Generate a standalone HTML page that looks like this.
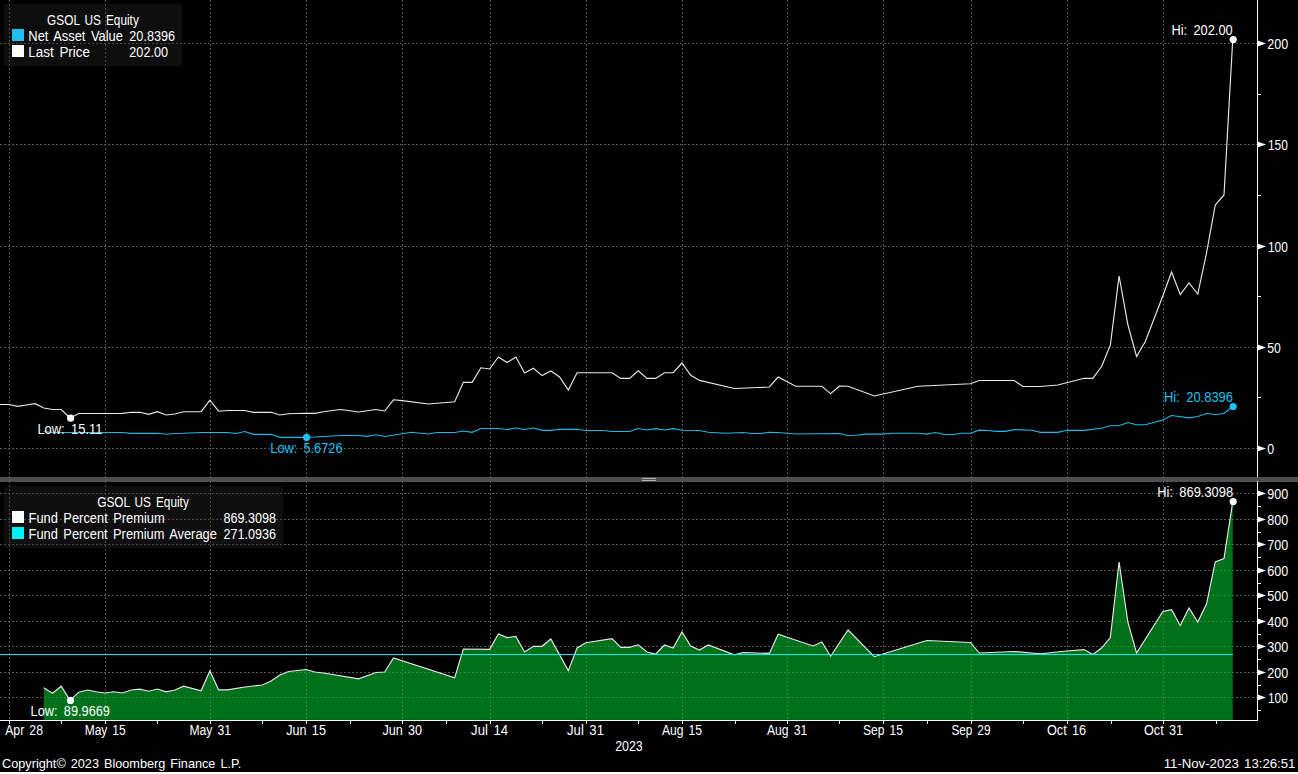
<!DOCTYPE html>
<html><head><meta charset="utf-8"><style>
html,body{margin:0;padding:0;background:#000;width:1298px;height:774px;overflow:hidden}
svg{display:block}
text{font-family:"Liberation Sans", sans-serif}
</style></head><body>
<svg width="1298" height="774" viewBox="0 0 1298 774">
<rect x="0" y="0" width="1298" height="774" fill="#000"/>
<rect x="0" y="772" width="1298" height="2" fill="#fff"/>
<path d="M9.5 0V477M9.5 481V720M105.5 0V477M105.5 481V720M210.5 0V477M210.5 481V720M306.5 0V477M306.5 481V720M402.5 0V477M402.5 481V720M490.5 0V477M490.5 481V720M586.5 0V477M586.5 481V720M682.5 0V477M682.5 481V720M787.5 0V477M787.5 481V720M883.5 0V477M883.5 481V720M971.5 0V477M971.5 481V720M1067.5 0V477M1067.5 481V720M1163.5 0V477M1163.5 481V720" stroke="#575757" stroke-width="1" stroke-dasharray="2 2" fill="none" shape-rendering="crispEdges"/>
<path d="M0 43.5H1257M0 144.5H1257M0 246.5H1257M0 347.5H1257M0 448.5H1257M0 493.5H1257M0 519.5H1257M0 544.5H1257M0 570.5H1257M0 595.5H1257M0 621.5H1257M0 646.5H1257M0 672.5H1257M0 697.5H1257" stroke="#575757" stroke-width="1" stroke-dasharray="2 2" fill="none" shape-rendering="crispEdges"/>
<rect x="4" y="4" width="178" height="62" rx="3" fill="rgba(47,47,47,0.3)"/>
<rect x="4" y="486" width="279" height="62" rx="3" fill="rgba(47,47,47,0.3)"/>
<path d="M43.77 720 L43.77 687.80 L52.51 693.20 L61.25 686.20 L70.00 700.40 L78.74 692.20 L87.48 690.00 L96.22 691.80 L104.97 693.00 L113.71 691.80 L122.45 693.00 L131.19 690.00 L139.94 689.20 L148.68 691.20 L157.42 689.00 L166.16 691.80 L174.91 690.00 L183.65 686.20 L201.13 690.80 L209.88 671.00 L218.62 689.80 L227.36 689.80 L244.84 687.00 L262.33 685.00 L271.07 681.00 L279.81 675.00 L288.56 671.50 L306.04 669.50 L314.78 672.00 L323.53 673.00 L358.50 678.80 L375.98 672.50 L384.72 672.00 L393.47 658.00 L454.66 677.70 L463.40 649.00 L489.63 649.30 L498.37 634.00 L507.12 637.60 L515.86 636.40 L524.60 652.00 L533.34 646.30 L542.09 646.30 L550.83 639.00 L568.31 670.60 L577.06 648.00 L585.80 642.70 L612.03 638.60 L620.77 647.30 L629.51 647.30 L638.25 644.80 L647.00 652.00 L655.74 654.00 L664.48 645.00 L673.22 648.00 L681.96 632.00 L690.71 646.00 L699.45 650.00 L708.19 645.00 L734.42 654.80 L743.16 652.50 L769.39 653.40 L778.13 634.30 L813.10 646.00 L821.84 642.00 L830.59 656.30 L848.07 630.00 L874.30 656.70 L883.04 654.00 L926.75 640.50 L970.46 642.50 L979.21 653.00 L1014.18 651.50 L1040.40 653.70 L1066.63 651.00 L1084.12 649.60 L1092.86 654.50 L1101.60 648.00 L1110.34 637.50 L1119.08 562.00 L1127.83 622.00 L1136.57 653.00 L1162.80 611.40 L1171.54 609.60 L1180.28 625.50 L1189.02 608.00 L1197.77 622.00 L1206.51 604.00 L1215.25 562.00 L1223.99 558.50 L1232.74 501.70 L1232.74 720Z" fill="#01701b"/>
<rect x="44" y="719" width="1189" height="1" fill="#006712"/>
<clipPath id="ca"><path d="M43.77 720 L43.77 687.80 L52.51 693.20 L61.25 686.20 L70.00 700.40 L78.74 692.20 L87.48 690.00 L96.22 691.80 L104.97 693.00 L113.71 691.80 L122.45 693.00 L131.19 690.00 L139.94 689.20 L148.68 691.20 L157.42 689.00 L166.16 691.80 L174.91 690.00 L183.65 686.20 L201.13 690.80 L209.88 671.00 L218.62 689.80 L227.36 689.80 L244.84 687.00 L262.33 685.00 L271.07 681.00 L279.81 675.00 L288.56 671.50 L306.04 669.50 L314.78 672.00 L323.53 673.00 L358.50 678.80 L375.98 672.50 L384.72 672.00 L393.47 658.00 L454.66 677.70 L463.40 649.00 L489.63 649.30 L498.37 634.00 L507.12 637.60 L515.86 636.40 L524.60 652.00 L533.34 646.30 L542.09 646.30 L550.83 639.00 L568.31 670.60 L577.06 648.00 L585.80 642.70 L612.03 638.60 L620.77 647.30 L629.51 647.30 L638.25 644.80 L647.00 652.00 L655.74 654.00 L664.48 645.00 L673.22 648.00 L681.96 632.00 L690.71 646.00 L699.45 650.00 L708.19 645.00 L734.42 654.80 L743.16 652.50 L769.39 653.40 L778.13 634.30 L813.10 646.00 L821.84 642.00 L830.59 656.30 L848.07 630.00 L874.30 656.70 L883.04 654.00 L926.75 640.50 L970.46 642.50 L979.21 653.00 L1014.18 651.50 L1040.40 653.70 L1066.63 651.00 L1084.12 649.60 L1092.86 654.50 L1101.60 648.00 L1110.34 637.50 L1119.08 562.00 L1127.83 622.00 L1136.57 653.00 L1162.80 611.40 L1171.54 609.60 L1180.28 625.50 L1189.02 608.00 L1197.77 622.00 L1206.51 604.00 L1215.25 562.00 L1223.99 558.50 L1232.74 501.70 L1232.74 720Z"/></clipPath>
<path d="M9.5 481V720M105.5 481V720M210.5 481V720M306.5 481V720M402.5 481V720M490.5 481V720M586.5 481V720M682.5 481V720M787.5 481V720M883.5 481V720M971.5 481V720M1067.5 481V720M1163.5 481V720M0 493.5H1257M0 519.5H1257M0 544.5H1257M0 570.5H1257M0 595.5H1257M0 621.5H1257M0 646.5H1257M0 672.5H1257M0 697.5H1257" stroke="#5a9a66" stroke-opacity="0.55" stroke-width="1" stroke-dasharray="2 2" fill="none" shape-rendering="crispEdges" clip-path="url(#ca)"/>
<polyline points="43.77,687.80 52.51,693.20 61.25,686.20 70.00,700.40 78.74,692.20 87.48,690.00 96.22,691.80 104.97,693.00 113.71,691.80 122.45,693.00 131.19,690.00 139.94,689.20 148.68,691.20 157.42,689.00 166.16,691.80 174.91,690.00 183.65,686.20 201.13,690.80 209.88,671.00 218.62,689.80 227.36,689.80 244.84,687.00 262.33,685.00 271.07,681.00 279.81,675.00 288.56,671.50 306.04,669.50 314.78,672.00 323.53,673.00 358.50,678.80 375.98,672.50 384.72,672.00 393.47,658.00 454.66,677.70 463.40,649.00 489.63,649.30 498.37,634.00 507.12,637.60 515.86,636.40 524.60,652.00 533.34,646.30 542.09,646.30 550.83,639.00 568.31,670.60 577.06,648.00 585.80,642.70 612.03,638.60 620.77,647.30 629.51,647.30 638.25,644.80 647.00,652.00 655.74,654.00 664.48,645.00 673.22,648.00 681.96,632.00 690.71,646.00 699.45,650.00 708.19,645.00 734.42,654.80 743.16,652.50 769.39,653.40 778.13,634.30 813.10,646.00 821.84,642.00 830.59,656.30 848.07,630.00 874.30,656.70 883.04,654.00 926.75,640.50 970.46,642.50 979.21,653.00 1014.18,651.50 1040.40,653.70 1066.63,651.00 1084.12,649.60 1092.86,654.50 1101.60,648.00 1110.34,637.50 1119.08,562.00 1127.83,622.00 1136.57,653.00 1162.80,611.40 1171.54,609.60 1180.28,625.50 1189.02,608.00 1197.77,622.00 1206.51,604.00 1215.25,562.00 1223.99,558.50 1232.74,501.70" stroke="#e8e8e8" stroke-width="1.15" fill="none" stroke-linejoin="miter"/>
<path d="M0 654.5H1233" stroke="#00f4f4" stroke-width="1.2" fill="none"/>
<polyline points="43.77,431.50 52.51,432.50 122.45,432.50 131.19,433.30 157.42,433.30 166.16,434.20 174.91,433.50 183.65,433.30 201.13,432.50 227.36,432.50 236.10,433.50 244.84,431.50 253.59,434.30 271.07,434.30 279.81,437.30 306.04,437.30 314.78,437.00 341.01,435.50 358.50,435.50 367.24,436.30 375.98,434.80 384.72,436.50 402.21,433.80 410.95,432.30 428.44,434.00 437.18,432.50 454.66,432.50 463.40,431.00 472.15,432.30 480.89,428.50 498.37,428.50 507.12,429.50 515.86,428.00 524.60,429.50 533.34,428.00 542.09,430.30 550.83,430.30 559.57,429.30 577.06,429.30 585.80,430.50 603.28,430.50 612.03,431.50 629.51,431.50 638.25,428.50 647.00,430.00 655.74,428.60 664.48,430.00 673.22,428.60 681.96,430.30 699.45,430.50 708.19,432.30 725.68,433.20 743.16,432.50 751.90,433.50 760.65,433.50 769.39,432.30 778.13,432.50 795.62,434.00 839.33,433.50 848.07,435.50 856.81,435.20 865.56,434.10 883.04,434.10 891.78,433.20 918.01,433.20 926.75,434.10 935.49,432.50 944.24,434.50 952.98,434.50 961.72,433.20 970.46,433.20 979.21,430.20 987.95,430.50 996.69,431.40 1005.43,431.40 1014.18,429.60 1031.66,430.30 1040.40,432.30 1057.89,432.30 1066.63,430.30 1084.12,430.30 1101.60,428.20 1110.34,425.80 1119.08,425.70 1127.83,422.50 1136.57,424.70 1145.31,424.70 1162.80,420.00 1171.54,415.50 1189.02,417.80 1197.77,416.50 1206.51,413.50 1215.25,414.50 1223.99,413.50 1232.74,406.50" stroke="#1cb8e6" stroke-width="1.15" fill="none"/>
<polyline points="-8.68,404.50 0.06,404.50 8.80,404.50 17.54,406.30 26.28,405.00 35.03,403.70 43.77,408.00 52.51,409.50 61.25,409.50 70.00,418.00 78.74,413.50 122.45,413.40 131.19,412.30 139.94,412.30 148.68,414.40 157.42,411.70 166.16,415.00 174.91,414.00 183.65,411.70 201.13,411.70 209.88,400.20 218.62,411.20 227.36,410.50 244.84,410.50 253.59,412.30 271.07,412.30 279.81,415.00 288.56,413.70 306.04,413.30 314.78,413.30 323.53,411.80 332.27,410.50 341.01,409.50 349.75,410.70 358.50,412.00 367.24,410.80 375.98,409.50 384.72,411.00 393.47,399.80 402.21,400.60 428.44,404.00 454.66,401.80 463.40,382.30 472.15,382.30 480.89,367.80 489.63,369.00 498.37,357.00 507.12,362.50 515.86,357.00 524.60,373.00 533.34,368.20 542.09,375.60 550.83,371.00 559.57,377.00 568.31,390.00 577.06,372.70 612.03,372.70 620.77,378.40 629.51,378.40 638.25,370.80 647.00,378.40 655.74,378.40 664.48,372.70 673.22,372.70 681.96,363.00 690.71,375.30 699.45,380.40 734.42,388.50 769.39,387.00 778.13,377.00 795.62,386.20 821.84,386.20 830.59,393.60 839.33,386.20 848.07,386.30 874.30,396.00 918.01,386.30 970.46,383.80 979.21,380.50 1014.18,380.50 1022.92,386.50 1040.40,386.50 1057.89,385.00 1066.63,382.80 1084.12,378.30 1092.86,378.30 1101.60,366.50 1110.34,345.20 1119.08,276.00 1127.83,324.50 1136.57,356.50 1145.31,341.50 1162.80,296.00 1171.54,272.00 1180.28,294.60 1189.02,283.00 1197.77,294.00 1206.51,253.00 1215.25,205.00 1223.99,195.00 1232.74,39.50" stroke="#e8e8e8" stroke-width="1.15" fill="none"/>
<circle cx="70.6" cy="418.2" r="3.6" fill="#fff"/>
<circle cx="306.6" cy="437.3" r="3.6" fill="#1ec0f0"/>
<circle cx="1233.2" cy="39.6" r="3.6" fill="#fff"/>
<circle cx="1233.2" cy="406.6" r="3.6" fill="#1ec0f0"/>
<circle cx="70.5" cy="700.4" r="3.6" fill="#fff"/>
<circle cx="1233.2" cy="501.6" r="3.6" fill="#fff"/>
<rect x="0" y="477" width="1298" height="5" fill="#4f4f4f"/>
<rect x="642" y="478" width="14" height="1" fill="#b0b0b0"/>
<rect x="642" y="480" width="14" height="1" fill="#b0b0b0"/>
<path d="M1257.5 0V477M1257.5 481V720.5M0 720.5H1257.5" stroke="#fafafa" stroke-width="1" fill="none" shape-rendering="crispEdges"/>
<path d="M1257.5 40.5L1266 43.5L1257.5 46.5ZM1257.5 141.5L1266 144.5L1257.5 147.5ZM1257.5 243.5L1266 246.5L1257.5 249.5ZM1257.5 344.5L1266 347.5L1257.5 350.5ZM1257.5 445.5L1266 448.5L1257.5 451.5ZM1257.5 490.5L1266 493.5L1257.5 496.5ZM1257.5 516.5L1266 519.5L1257.5 522.5ZM1257.5 541.5L1266 544.5L1257.5 547.5ZM1257.5 567.5L1266 570.5L1257.5 573.5ZM1257.5 592.5L1266 595.5L1257.5 598.5ZM1257.5 618.5L1266 621.5L1257.5 624.5ZM1257.5 643.5L1266 646.5L1257.5 649.5ZM1257.5 669.5L1266 672.5L1257.5 675.5ZM1257.5 694.5L1266 697.5L1257.5 700.5Z" fill="#fafafa"/>
<path d="M1257 94.5H1261M1257 195.5H1261M1257 296.5H1261M1257 397.5H1261M1257 506.5H1261M1257 532.5H1261M1257 557.5H1261M1257 583.5H1261M1257 608.5H1261M1257 634.5H1261M1257 659.5H1261M1257 685.5H1261M1257 710.5H1261M9.5 720V724M61.5 720V724M105.5 720V724M157.5 720V724M210.5 720V724M262.5 720V724M306.5 720V724M350.5 720V724M402.5 720V724M446.5 720V724M490.5 720V724M542.5 720V724M586.5 720V724M638.5 720V724M682.5 720V724M735.5 720V724M787.5 720V724M839.5 720V724M883.5 720V724M927.5 720V724M971.5 720V724M1023.5 720V724M1067.5 720V724M1111.5 720V724M1163.5 720V724M1216.5 720V724" stroke="#fafafa" stroke-width="1" fill="none" shape-rendering="crispEdges"/>
<text x="1267.30" y="49.0" fill="#fff" font-size="14" word-spacing="2.0" textLength="20.96" lengthAdjust="spacingAndGlyphs">200</text>
<text x="1267.90" y="150.0" fill="#fff" font-size="14" word-spacing="2.0" textLength="19.86" lengthAdjust="spacingAndGlyphs">150</text>
<text x="1267.90" y="252.0" fill="#fff" font-size="14" word-spacing="2.0" textLength="19.86" lengthAdjust="spacingAndGlyphs">100</text>
<text x="1267.30" y="353.0" fill="#fff" font-size="14" word-spacing="2.0" textLength="13.58" lengthAdjust="spacingAndGlyphs">50</text>
<text x="1267.30" y="454.0" fill="#fff" font-size="14" word-spacing="2.0" textLength="6.89" lengthAdjust="spacingAndGlyphs">0</text>
<text x="1267.30" y="499.0" fill="#fff" font-size="14" word-spacing="2.0" textLength="20.96" lengthAdjust="spacingAndGlyphs">900</text>
<text x="1267.30" y="525.0" fill="#fff" font-size="14" word-spacing="2.0" textLength="20.96" lengthAdjust="spacingAndGlyphs">800</text>
<text x="1267.30" y="550.0" fill="#fff" font-size="14" word-spacing="2.0" textLength="20.96" lengthAdjust="spacingAndGlyphs">700</text>
<text x="1267.30" y="576.0" fill="#fff" font-size="14" word-spacing="2.0" textLength="20.96" lengthAdjust="spacingAndGlyphs">600</text>
<text x="1267.30" y="601.0" fill="#fff" font-size="14" word-spacing="2.0" textLength="20.96" lengthAdjust="spacingAndGlyphs">500</text>
<text x="1267.30" y="627.0" fill="#fff" font-size="14" word-spacing="2.0" textLength="20.96" lengthAdjust="spacingAndGlyphs">400</text>
<text x="1267.30" y="652.0" fill="#fff" font-size="14" word-spacing="2.0" textLength="20.96" lengthAdjust="spacingAndGlyphs">300</text>
<text x="1267.30" y="678.0" fill="#fff" font-size="14" word-spacing="2.0" textLength="20.96" lengthAdjust="spacingAndGlyphs">200</text>
<text x="1267.90" y="703.0" fill="#fff" font-size="14" word-spacing="2.0" textLength="19.86" lengthAdjust="spacingAndGlyphs">100</text>
<text x="5.20" y="735.0" fill="#fff" font-size="14" word-spacing="2.0" textLength="37.74" lengthAdjust="spacingAndGlyphs">Apr 28</text>
<text x="84.70" y="735.0" fill="#fff" font-size="14" word-spacing="2.0" textLength="41.01" lengthAdjust="spacingAndGlyphs">May 15</text>
<text x="189.40" y="735.0" fill="#fff" font-size="14" word-spacing="2.0" textLength="41.71" lengthAdjust="spacingAndGlyphs">May 31</text>
<text x="286.20" y="735.0" fill="#fff" font-size="14" word-spacing="2.0" textLength="39.73" lengthAdjust="spacingAndGlyphs">Jun 15</text>
<text x="382.40" y="735.0" fill="#fff" font-size="14" word-spacing="2.0" textLength="39.73" lengthAdjust="spacingAndGlyphs">Jun 30</text>
<text x="471.10" y="735.0" fill="#fff" font-size="14" word-spacing="2.0" textLength="36.96" lengthAdjust="spacingAndGlyphs">Jul 14</text>
<text x="567.00" y="735.0" fill="#fff" font-size="14" word-spacing="2.0" textLength="36.96" lengthAdjust="spacingAndGlyphs">Jul 31</text>
<text x="661.90" y="735.0" fill="#fff" font-size="14" word-spacing="2.0" textLength="40.17" lengthAdjust="spacingAndGlyphs">Aug 15</text>
<text x="767.00" y="735.0" fill="#fff" font-size="14" word-spacing="2.0" textLength="40.17" lengthAdjust="spacingAndGlyphs">Aug 31</text>
<text x="863.00" y="735.0" fill="#fff" font-size="14" word-spacing="2.0" textLength="39.87" lengthAdjust="spacingAndGlyphs">Sep 15</text>
<text x="951.40" y="735.0" fill="#fff" font-size="14" word-spacing="2.0" textLength="39.07" lengthAdjust="spacingAndGlyphs">Sep 29</text>
<text x="1047.00" y="735.0" fill="#fff" font-size="14" word-spacing="2.0" textLength="39.14" lengthAdjust="spacingAndGlyphs">Oct 16</text>
<text x="1144.00" y="735.0" fill="#fff" font-size="14" word-spacing="2.0" textLength="39.04" lengthAdjust="spacingAndGlyphs">Oct 31</text>
<text x="615.20" y="751.0" fill="#fff" font-size="14" word-spacing="2.0" textLength="27.44" lengthAdjust="spacingAndGlyphs">2023</text>
<text x="2.10" y="768.0" fill="#fff" font-size="13" word-spacing="1.5" textLength="239.24" lengthAdjust="spacingAndGlyphs">Copyright&#169; 2023 Bloomberg Finance L.P.</text>
<text x="1163.70" y="768.0" fill="#fff" font-size="13" word-spacing="1.5" textLength="131.71" lengthAdjust="spacingAndGlyphs">11-Nov-2023 13:26:51</text>
<text x="47.10" y="25.0" fill="#fff" font-size="14" word-spacing="2.0" textLength="91.72" lengthAdjust="spacingAndGlyphs">GSOL US Equity</text>
<rect x="12" y="29" width="12" height="12" fill="#1ec0f0"/>
<rect x="12" y="45" width="12" height="12" fill="#fff"/>
<text x="28.30" y="41.0" fill="#fff" font-size="14" word-spacing="2.0" textLength="94.67" lengthAdjust="spacingAndGlyphs">Net Asset Value</text>
<text x="129.30" y="41.0" fill="#fff" font-size="14" word-spacing="2.0" textLength="45.80" lengthAdjust="spacingAndGlyphs">20.8396</text>
<text x="28.30" y="57.0" fill="#fff" font-size="14" word-spacing="2.0" textLength="61.75" lengthAdjust="spacingAndGlyphs">Last Price</text>
<text x="129.30" y="57.0" fill="#fff" font-size="14" word-spacing="2.0" textLength="38.72" lengthAdjust="spacingAndGlyphs">202.00</text>
<text x="97.20" y="507.0" fill="#fff" font-size="14" word-spacing="2.0" textLength="91.62" lengthAdjust="spacingAndGlyphs">GSOL US Equity</text>
<rect x="12" y="511" width="12" height="12" fill="#fff"/>
<rect x="12" y="527" width="12" height="12" fill="#00f2f2"/>
<text x="28.60" y="523.0" fill="#fff" font-size="14" word-spacing="2.0" textLength="136.04" lengthAdjust="spacingAndGlyphs">Fund Percent Premium</text>
<text x="223.40" y="523.0" fill="#fff" font-size="14" word-spacing="2.0" textLength="52.59" lengthAdjust="spacingAndGlyphs">869.3098</text>
<text x="28.60" y="539.0" fill="#fff" font-size="14" word-spacing="2.0" textLength="188.25" lengthAdjust="spacingAndGlyphs">Fund Percent Premium Average</text>
<text x="223.40" y="539.0" fill="#fff" font-size="14" word-spacing="2.0" textLength="52.59" lengthAdjust="spacingAndGlyphs">271.0936</text>
<text x="1171.40" y="35.0" fill="#fff" font-size="14" word-spacing="3.0" textLength="61.32" lengthAdjust="spacingAndGlyphs">Hi: 202.00</text>
<text x="1164.00" y="402.0" fill="#1ec0f0" font-size="14" word-spacing="3.0" textLength="69.00" lengthAdjust="spacingAndGlyphs">Hi: 20.8396</text>
<text x="37.40" y="434.0" fill="#fff" font-size="14" word-spacing="3.0" textLength="65.06" lengthAdjust="spacingAndGlyphs">Low: 15.11</text>
<text x="270.30" y="453.0" fill="#1ec0f0" font-size="14" word-spacing="3.0" textLength="72.18" lengthAdjust="spacingAndGlyphs">Low: 5.6726</text>
<text x="1157.30" y="497.0" fill="#fff" font-size="14" word-spacing="3.0" textLength="75.79" lengthAdjust="spacingAndGlyphs">Hi: 869.3098</text>
<text x="30.60" y="716.0" fill="#fff" font-size="14" word-spacing="3.0" textLength="79.37" lengthAdjust="spacingAndGlyphs">Low: 89.9669</text>
</svg>
</body></html>
